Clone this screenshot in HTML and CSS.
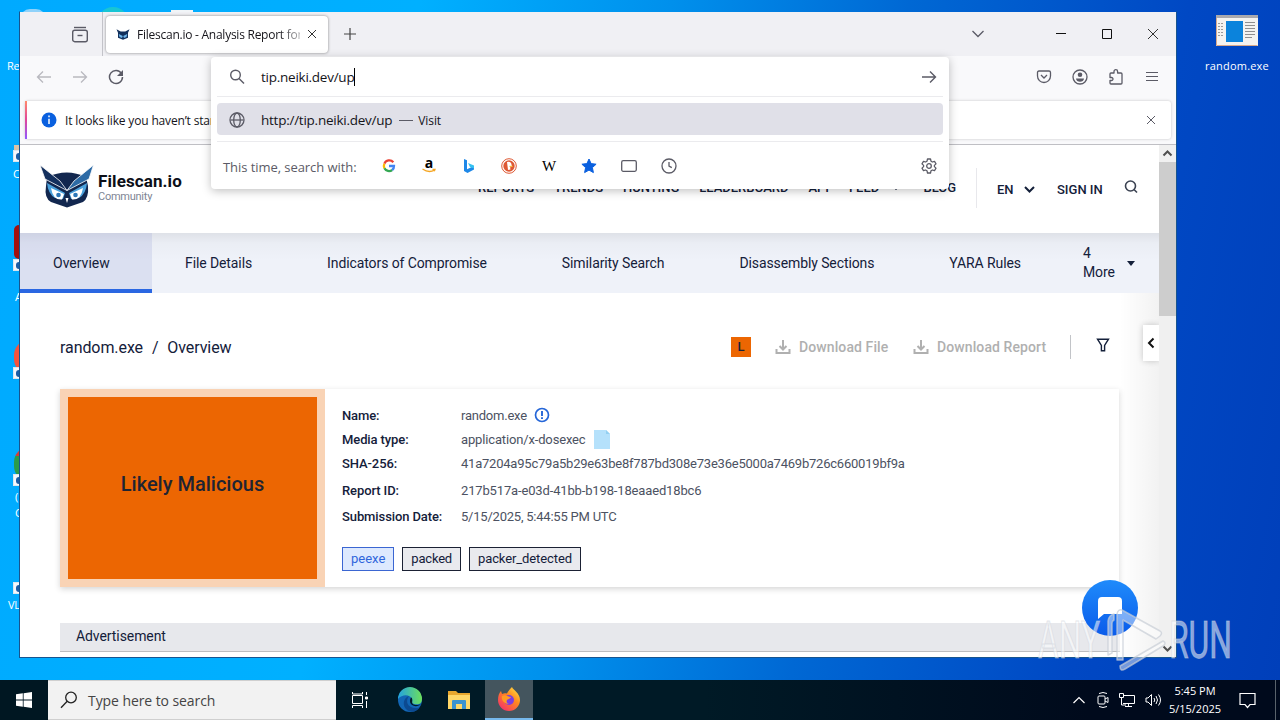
FILE: index.html
```html
<!DOCTYPE html>
<html lang="en">
<head>
    <meta charset="UTF-8">
    <title>Filescan.io - Analysis Report</title>
    <link rel="stylesheet" href="styles.css">
</head>
<body>
<div class="desktop">
    <!-- desktop icons -->
    <div class="peek peek-bin"></div>
    <div class="peek peek-edge"></div>
    <div class="peek peek-doc"></div>
    <span class="icon-label label-re">Re</span>
    <i class="shape shape-cc"></i><i class="shortcut sc-1"></i>
    <span class="icon-label label-cc">C</span>
    <i class="shape shape-red"></i><i class="shortcut sc-2"></i>
    <span class="icon-label label-ac">A</span>
    <i class="shape shape-fox"></i><i class="shortcut sc-3"></i>
    <i class="shape shape-chrome"></i><i class="shortcut sc-4"></i>
    <span class="icon-label label-g">(<br>C</span>
    <i class="shortcut sc-5"></i>
    <span class="icon-label label-vlc">VL</span>
    <div class="exe-icon">
        <svg width="42" height="32" viewBox="0 0 42 32"><path fill="#f4f3f0" d="M0 0h42v31H0z"/><path fill="#a9a9ae" d="M0 0h42v3H0z"/><path fill="#0b83dc" d="M10 6h17v21H10z"/><path stroke="#9b9b9b" stroke-dasharray="2 1" d="M2 8.500h6M2 11.500h6M2 14.500h6M2 17.500h6M2 20.500h6"/><path stroke="#8f8f8f" d="M29 7.500h10M29 10.500h10M29 13.500h10M29 16.500h10M29 19.500h10M29 22.500h7"/><path stroke="#d8a98b" fill="none" d="M.5 3v27.500h41"/></svg>
        <span>random.exe</span>
    </div>

    <!-- browser window -->
    <div class="window">
        <div class="tabstrip">
            <div class="tab-left">
                <svg width="18" height="18" viewBox="0 0 18 18" fill="none" stroke="#5b5b66" stroke-width="1.400"><path d="M3 1.500h12"/><rect x="1.700" y="4.200" width="14.600" height="11.500" rx="2"/><path d="M6.500 9.500h5"/></svg>
            </div>
            <div class="tab">
                <svg width="14" height="13" viewBox="0 0 56 44"><path fill="#12305c" d="M2 1l17 9h18L54 1l-6 14v20L28 43 8 35V15z"/><path fill="#6fb5ea" d="M11 20l16 8-3 8-10-4zM45 20l-16 8 3 8 10-4z"/></svg>
                <span class="tab-title">Filescan.io - Analysis Report for</span>
                <svg width="10" height="10" viewBox="0 0 10 10" stroke="#333"><path d="M1 1l8 8M9 1l-8 8"/></svg>
            </div>
            <svg class="plus" width="12" height="12" viewBox="0 0 12 12" stroke="#444" stroke-width="1.200"><path d="M6 0v12M0 6h12"/></svg>
            <div class="win-buttons">
                <svg width="14" height="8" viewBox="0 0 14 8" fill="none" stroke="#5b5b66" stroke-width="1.300"><path d="M1.500 1L7 6.500 12.500 1"/></svg>
                <svg width="10" height="10" viewBox="0 0 10 10" stroke="#111"><path d="M0 4.500h10"/></svg>
                <svg width="10" height="10" viewBox="0 0 10 10" stroke="#111" fill="none"><path d="M.5.5h9v9h-9z"/></svg>
                <svg width="10" height="10" viewBox="0 0 10 10" stroke="#333"><path d="M0 0l10 10M10 0L0 10"/></svg>
            </div>
        </div>
        <div class="toolbar">
            <div class="nav-buttons">
                <svg width="16" height="16" viewBox="0 0 16 16" fill="none" stroke="#b9b9bf" stroke-width="1.300"><path d="M15 8H1.500M7 2.500L1.500 8 7 13.500"/></svg>
                <svg width="16" height="16" viewBox="0 0 16 16" fill="none" stroke="#b9b9bf" stroke-width="1.300"><path d="M1 8h13.500M9 2.500L14.500 8 9 13.500"/></svg>
                <svg width="16" height="16" viewBox="0 0 16 16" fill="none" stroke="#5b5b66" stroke-width="1.500"><path d="M13.500 4.500A6.500 6.500 0 1 0 14.500 8"/><path fill="#5b5b66" stroke="none" d="M15 1v6H9z"/></svg>
            </div>
            <div class="tool-icons">
                <svg width="16" height="16" viewBox="0 0 16 16" fill="none" stroke="#5b5b66" stroke-width="1.300"><path d="M3 2h10q1.500 0 1.500 1.500V7a6.500 6.500 0 0 1-13 0V3.500Q1.500 2 3 2z"/><path d="M5 6l3 3 3-3"/></svg>
                <svg width="16" height="16" viewBox="0 0 16 16"><circle cx="8" cy="8" r="7" fill="none" stroke="#5b5b66" stroke-width="1.300"/><circle cx="8" cy="5.800" r="2.300" fill="#5b5b66"/><path fill="#5b5b66" d="M4 9.500h8c0 2-2 3.300-4 3.300s-4-1.300-4-3.300z"/></svg>
                <svg width="16" height="16" viewBox="0 0 16 16" fill="none" stroke="#5b5b66" stroke-width="1.300" stroke-linejoin="round"><path d="M2 7V5q0-1 1-1h3V2.500a1.800 1.800 0 0 1 3.600 0V4H13q1 0 1 1v9q0 1-1 1H3q-1 0-1-1v-2.500h1.500a1.500 1.500 0 0 0 0-3H2z"/></svg>
                <svg width="14" height="12" viewBox="0 0 14 12" stroke="#5b5b66" stroke-width="1.200"><path d="M1 1.500h12M1 5.500h12M1 9.500h12"/></svg>
            </div>
        </div>
        <div class="notice-wrap">
            <div class="notice">
                <svg width="16" height="16" viewBox="0 0 16 16"><circle cx="8" cy="8" r="7.500" fill="#0a60df"/><path stroke="#fff" stroke-width="1.500" d="M8 3.500v1.700M8 6.800v5.200"/></svg>
                <span>It looks like you haven’t star</span>
                <svg class="notice-close" width="10" height="10" viewBox="0 0 10 10" stroke="#5b5b66"><path d="M1 1l8 8M9 1l-8 8"/></svg>
            </div>
        </div>

        <div class="viewport">
            <div class="page">
                <div class="header">
                    <div class="logo">
                        <svg width="54" height="44" viewBox="0 0 54 44"><path fill="#12274f" d="M7 13q20-9 39 0l2 9q1 12-5 16l-16 5.500L11 38Q4 34 6 22z"/><path fill="#14305e" stroke="#fff" stroke-width=".8" d="M0 1l20 16 7 9.500L5 15z"/><path fill="#2d6ba6" stroke="#fff" stroke-width=".8" d="M53.500 1L34 17l-7 9.500L49 15z"/><path fill="#4ba1dc" d="M7 19l18 10-2 6-8-1q-7-4-8-15zM47 19L29 29l2 6 8-1q7-4 8-15z"/><path fill="#fff" d="M11 24l13 6-2 5.500q-9 1-11-11.500zM43 24l-13 6 2 5.500q9 1 11-11.500z"/><circle cx="18.500" cy="31" r="2.300" fill="#2c77b8"/><circle cx="35.500" cy="31" r="2.300" fill="#2c77b8"/><path fill="#fff" d="M25.500 34h3L27 39z"/></svg>
                        <div class="logo-text"><b>Filescan.io</b><span>Community</span></div>
                    </div>
                    <div class="menu">
                        <a>REPORTS</a><a>TRENDS</a><a>HUNTING</a><a>LEADERBOARD</a><a>API</a>
                        <a class="feed">FEED <svg width="8" height="5" viewBox="0 0 8 5" fill="none" stroke="#14203a" stroke-width="1.500"><path d="M0 .5l4 3.500 4-3.500"/></svg></a>
                        <a>BLOG</a>
                    </div>
                    <div class="account">
                        <a class="lang">EN <svg width="11" height="7" viewBox="0 0 11 7" fill="none" stroke="#14203a" stroke-width="2"><path d="M1 1l4.500 4.500L10 1"/></svg></a>
                        <a class="signin">SIGN IN</a>
                        <svg class="find" width="14" height="14" viewBox="0 0 14 14" fill="none" stroke="#3b4252" stroke-width="1.600"><circle cx="6.500" cy="6" r="5"/><path d="M10 9.500l3 3"/></svg>
                    </div>
                </div>
                <div class="report-tabs">
                    <a class="active">Overview</a>
                    <a>File Details</a>
                    <a>Indicators of Compromise</a>
                    <a>Similarity Search</a>
                    <a>Disassembly Sections</a>
                    <a>YARA Rules</a>
                    <a class="more"><span>4<br>More</span><i></i></a>
                </div>
                <div class="content">
                    <div class="crumbs">
                        <h1>random.exe <em>/</em> Overview</h1>
                        <span class="verdict-l">L</span>
                        <a class="dl dl-file"><svg width="16" height="16" viewBox="0 0 16 16" fill="none" stroke="#b0b0b0" stroke-width="2"><path d="M8 1v9M4.500 7L8 10.500 11.500 7M1.500 10v4h13v-4"/></svg>Download File</a>
                        <a class="dl dl-report"><svg width="16" height="16" viewBox="0 0 16 16" fill="none" stroke="#b0b0b0" stroke-width="2"><path d="M8 1v9M4.500 7L8 10.500 11.500 7M1.500 10v4h13v-4"/></svg>Download Report</a>
                        <svg class="filter" width="14" height="14" viewBox="0 0 14 14" fill="none" stroke="#14203a" stroke-width="1.400"><path d="M1.500 1.200h11L8.600 7.500v5.300H5.400V7.500z"/></svg>
                    </div>
                    <div class="card">
                        <div class="verdict">Likely Malicious</div>
                        <div class="details">
                            <div class="row"><b>Name:</b><span>random.exe</span><svg class="alert" width="16" height="16" viewBox="0 0 16 16"><circle cx="8" cy="8" r="6.500" fill="#fff" stroke="#2566d8" stroke-width="1.700"/><path stroke="#2566d8" stroke-width="1.900" d="M8 4v5M8 10.300V12"/></svg></div>
                            <div class="row"><b>Media type:</b><span class="mime">application/x-dosexec</span><svg class="file" width="16" height="19" viewBox="0 0 16 19"><path fill="#b5e1fb" d="M0 0h12l4 4v15H0z"/><path fill="#93d0f2" d="M12 0l4 4h-4z"/></svg></div>
                            <div class="row"><b>SHA-256:</b><span>41a7204a95c79a5b29e63be8f787bd308e73e36e5000a7469b726c660019bf9a</span></div>
                            <div class="row tall first"><b>Report ID:</b><span class="mime">217b517a-e03d-41bb-b198-18eaaed18bc6</span></div>
                            <div class="row tall"><b>Submission Date:</b><span>5/15/2025, 5:44:55 PM UTC</span></div>
                            <div class="tags"><span class="tag blue">peexe</span><span class="tag">packed</span><span class="tag">packer_detected</span></div>
                        </div>
                    </div>
                    <div class="advert">Advertisement</div>
                </div>
                <div class="drawer-shade"></div>
                <div class="drawer"><svg width="8" height="12" viewBox="0 0 8 12" fill="none" stroke="#111" stroke-width="2"><path d="M6.500 1.500L2 6l4.500 4.500"/></svg></div>
                <div class="chat"><svg width="26" height="23" viewBox="0 0 26 23"><path fill="#fff" d="M5 0h16q4 0 4 4v13H7l-6 5V4q0-4 4-4z"/></svg></div>
            </div>
            <div class="scrollbar">
                <svg width="17" height="17" viewBox="0 0 17 17" fill="none" stroke="#505050" stroke-width="2"><path d="M4.500 10.500l4-4 4 4"/></svg>
                <div class="thumb"></div>
                <svg width="17" height="17" viewBox="0 0 17 17" fill="none" stroke="#505050" stroke-width="2"><path d="M4.500 6.500l4 4 4-4"/></svg>
            </div>
        </div>

        <!-- address bar dropdown -->
        <div class="urlbar">
            <div class="url-input">
                <svg width="16" height="16" viewBox="0 0 16 16" fill="none" stroke="#5b5b66" stroke-width="1.400"><circle cx="6.500" cy="6" r="4.800"/><path d="M10 9.500l5 5"/></svg>
                <span class="url-text">tip.neiki.dev/up</span><i class="caret"></i>
                <svg class="go" width="16" height="16" viewBox="0 0 16 16" fill="none" stroke="#5b5b66" stroke-width="1.400"><path d="M1 8h13.500M9 2.500L14.500 8 9 13.500"/></svg>
            </div>
            <div class="result">
                <svg width="16" height="16" viewBox="0 0 16 16" fill="none" stroke="#5b5b66" stroke-width="1.300"><circle cx="8" cy="8" r="7"/><ellipse cx="8" cy="8" rx="3.300" ry="7"/><path d="M1.500 8h13"/></svg>
                <span class="result-url">http://tip.neiki.dev/up</span><span class="visit"><s></s>Visit</span>
            </div>
            <div class="engines">
                <span class="engines-label">This time, search with:</span>
                <svg width="16" height="16" viewBox="0 0 16 16" fill="none" stroke-width="2.300"><path stroke="#ea4335" d="M12.300 4.200A5.200 5.200 0 0 0 3.400 5.700"/><path stroke="#fbbc05" d="M3.400 5.700a5.200 5.200 0 0 0 0 4.600"/><path stroke="#34a853" d="M3.400 10.300a5.200 5.200 0 0 0 7.800 1.700"/><path stroke="#4285f4" d="M11.200 12A5 5 0 0 0 13 8H8"/></svg>
                <svg width="16" height="16" viewBox="0 0 16 16" overflow="visible"><text x="8" y="10" text-anchor="middle" class="amazon">a</text><path d="M1.500 11q6.500 4.500 12 1M11.500 11.300h2.500l-.7 2" fill="none" stroke="#f5a623" stroke-width="1.300"/></svg>
                <svg width="16" height="16" viewBox="0 0 16 16"><path fill="#1e88e8" d="M3 1l3 1.200v9L13 8v3.500L6.500 15 3 13z"/><path fill="#35c1f1" d="M7 5l6 2.500v3L9 9z"/></svg>
                <svg width="16" height="16" viewBox="0 0 16 16"><circle cx="8" cy="8" r="7.300" fill="#fff" stroke="#de5833"/><circle cx="8" cy="8" r="5.700" fill="#de5833"/><path fill="#fff" d="M6 4q4-1 4.500 2.500l.5 2-2 1 .5 2-2.500.5z"/><path fill="#fbbc3d" d="M8.500 7.800h3V9h-3z"/></svg>
                <svg width="16" height="16" viewBox="0 0 16 16"><text x="8" y="13" text-anchor="middle" class="wiki">W</text></svg>
                <svg width="16" height="16" viewBox="0 0 16 16"><path fill="#0a60df" stroke="#0a60df" stroke-linejoin="round" d="M8 1l2.100 4.600 5 .6-3.700 3.400 1 5L8 12.100l-4.400 2.500 1-5L.9 6.200l5-.6z"/></svg>
                <svg width="16" height="16" viewBox="0 0 16 16" fill="none" stroke="#5b5b66" stroke-width="1.300"><rect x=".7" y="2.700" width="14.600" height="10.600" rx="1.500"/></svg>
                <svg width="16" height="16" viewBox="0 0 16 16" fill="none" stroke="#5b5b66" stroke-width="1.300"><circle cx="8" cy="8" r="7"/><path d="M8 4v4l2.800 1.600"/></svg>
                <svg class="gear" width="16" height="16" viewBox="0 0 16 16" fill="none" stroke="#5b5b66" stroke-width="1.300" stroke-linejoin="round"><path d="M6.500 1h3l.5 2.200 1.400.8 2.100-.7L15 5.900 13.400 7.400v1.200L15 10.100l-1.500 2.600-2.100-.7-1.400.8-.5 2.200h-3L6 12.800 4.600 12l-2.100.7L1 10.100l1.600-1.500V7.400L1 5.900l1.500-2.600 2.100.7L6 3.200z"/><circle cx="8" cy="8" r="2.300"/></svg>
            </div>
        </div>
    </div>

    <!-- watermark -->
    <svg class="watermark" width="200" height="68" viewBox="0 0 200 68" overflow="visible">
        <g class="wm-text"><text x="2" y="52" textLength="62" lengthAdjust="spacingAndGlyphs">ANY</text><text x="133" y="52" textLength="63" lengthAdjust="spacingAndGlyphs">RUN</text></g>
        <g fill="rgba(255,255,255,.45)" stroke="#c8cdd6" stroke-opacity=".7" stroke-width="1.500" stroke-linejoin="round"><path d="M72 49V15q1-6 6-7v6q-2 1-2 3v30z"/><path d="M81 8q1-5 5-4l38 21q3 2 0 5l-4 3-33-19v40h-6z"/><path d="M84 60l43-25q4 2 0 5L89 63q-5 3-5-3z"/></g>
    </svg>
</div>

<!-- taskbar -->
<div class="taskbar">
    <div class="start"><svg width="16" height="16" viewBox="0 0 16 16" fill="#fff"><path d="M0 2.200L6.800 1.300v6.300H0zM7.600 1.200L16 0v7.600H7.600zM0 8.400h6.800v6.300L0 13.800zM7.600 8.400H16V16l-8.400-1.200z"/></svg></div>
    <div class="search"><svg width="18" height="18" viewBox="0 0 18 18" fill="none" stroke="#222" stroke-width="1.300"><circle cx="11" cy="6.500" r="5.300"/><path d="M7.200 10.300L1 16.800"/></svg><span>Type here to search</span></div>
    <div class="apps">
        <div class="app"><svg width="18" height="18" viewBox="0 0 18 18" fill="none" stroke="#fff"><path d="M1.500 4.500h10v8h-10zM1.500 1v2h10V1M1.500 17v-2.500h10V17M15.500 1v3M15.500 10v7"/><path fill="#fff" d="M14.500 6h2v2h-2z"/></svg></div>
        <div class="app"><svg width="26" height="26" viewBox="0 0 26 26"><defs><linearGradient id="e1" x1="0" x2="1"><stop stop-color="#23a3e0"/><stop offset="1" stop-color="#6de05c"/></linearGradient></defs><circle cx="13" cy="13" r="12" fill="#1266b5"/><path fill="url(#e1)" d="M1 12A12 12 0 0 1 25 12c0 5-4 6-8 5-3-1-1-2-2-5-2-5-10-5-14 0z"/><path fill="#0c4a91" d="M12 9c-4 5-2 13 9 12 1 0 2-1 2-1-3 5-9 6-13 3-5-4-4-12 2-14z"/><path fill="#001a26" d="M14.500 10.500c2 3-1 5 2 7 3 1 6 .5 7.500-.5-4 4-11 2-11-3 0-2 .5-3 1.500-3.500z"/></svg></div>
        <div class="app"><svg width="22" height="20" viewBox="0 0 22 20"><path fill="#e8a72e" d="M0 1h8l2 2h12v15H0z"/><path fill="#ffd768" d="M0 5h22v14H0z"/><path fill="#3c93cf" d="M4 11q0-1 1-1h12q1 0 1 1v8h-4v-5H8v5H4z"/></svg></div>
        <div class="app current"><svg width="24" height="24" viewBox="0 0 24 24"><defs><linearGradient id="f1" x1="1" x2=".2" y2="1"><stop stop-color="#fff04a"/><stop offset=".45" stop-color="#ff8a1f"/><stop offset="1" stop-color="#f4306a"/></linearGradient></defs><path fill="url(#f1)" d="M15 0c1 3 8 6 8 13A11 11 0 0 1 1 13c0-4 1-7 3-9l1 3c2-1 3-1 5-.500 0 0 2-4 5-6.500z"/><circle cx="12" cy="13" r="5" fill="#7a3fe0"/><path fill="#ff9a24" d="M5 9c4-2 6 1 9 1-1 2-3 2-4 3-1 2 0 3 2 4-5 0-8-4-7-8z"/></svg></div>
    </div>
    <div class="tray">
        <svg width="12" height="8" viewBox="0 0 12 8" fill="none" stroke="#fff" stroke-width="1.200"><path d="M.5 7L6 1.500 11.500 7"/></svg>
        <svg width="12" height="18" viewBox="0 0 12 18" fill="none" stroke="#fff"><rect x="1" y="5" width="7" height="8" rx="1"/><path d="M8 8l3-1.500v5L8 10M2 2.500q4-2 8 0M2 15.500q4 2 8 0"/></svg>
        <svg width="16" height="14" viewBox="0 0 16 14" fill="none" stroke="#fff"><path d="M4 2.500h11.500v8H4M.5.500h4v4h-4zM2.500 4.500V12H7M9.500 10.500v3M6 13.500h7"/></svg>
        <svg width="17" height="14" viewBox="0 0 17 14" fill="none" stroke="#fff"><path d="M1 5h2l3.500-3.500v11L3 9H1zM9 5q1.500 2 0 4M11 3q3 4 0 8M13.500 1.500q4 5.500 0 11"/></svg>
        <div class="clock">5:45 PM<br>5/15/2025</div>
        <svg class="action" width="17" height="17" viewBox="0 0 17 17" fill="none" stroke="#fff" stroke-width="1.200"><path d="M1 1.500h15v11h-5L8.500 15.500 6 12.500H1z"/></svg>
    </div>
    <div class="show-desktop"></div>
</div>
</body>
</html>
```
FILE: styles.css
```css
* {
    box-sizing: border-box;
}
body {
    margin: 0;
    width: 1280px;
    height: 720px;
    overflow: hidden;
    font-family: "Open Sans", "Noto Sans", sans-serif;
    font-size: 12px;
    color: #15141a;
}
svg {
    display: block;
    flex: none;
}

/* desktop */
.desktop {
    position: relative;
    height: 680px;
    overflow: hidden;
    background: linear-gradient(100deg, #00aaff 0%, #00b0ff 30%, #0090ec 48%, #0068d4 65%, #0048c4 85%, #003fba 100%);
}
.peek {
    position: absolute;
}
.peek-bin {
    left: 20px;
    top: 9px;
    width: 26px;
    height: 20px;
    border-radius: 10px;
    background: #8fd2fa;
}
.peek-edge {
    left: 97px;
    top: 7px;
    width: 32px;
    height: 32px;
    border-radius: 50%;
    background: #18c5d4;
}
.peek-doc {
    left: 171px;
    top: 10px;
    width: 22px;
    height: 20px;
    background: #f1f5f8;
}
.icon-label {
    position: absolute;
    color: #fff;
    font-size: 11px;
    line-height: 16px;
    white-space: nowrap;
    letter-spacing: -.3px;
}
.label-re { left: 7px; top: 58px; }
.label-cc { left: 13px; top: 166px; }
.label-ac { left: 15px; top: 289px; }
.label-g { left: 15px; top: 489px; }
.label-vlc { left: 8px; top: 597px; }
.shape {
    position: absolute;
    left: 14px;
    width: 30px;
    height: 34px;
}
.shape-cc { top: 145px; height: 14px; background: #d9c3a8; }
.shape-red { top: 225px; border-radius: 5px; background: #a3110f; }
.shape-fox { top: 340px; border-radius: 15px; background: #f4533c; }
.shape-chrome { top: 447px; border-radius: 15px; background: linear-gradient(#d93a35 25%, #2b9b4a 25%); }
.shortcut {
    position: absolute;
    left: 13px;
    width: 12px;
    height: 12px;
    background: #f4f7fb;
    border: 1px solid #dce6ee;
}
.shortcut:after {
    content: "";
    position: absolute;
    left: 2px;
    top: 2px;
    width: 6px;
    height: 7px;
    border-radius: 3px 0 0 3px;
    background: #1c5da6;
}
.sc-1 { top: 150px; }
.sc-2 { top: 259px; }
.sc-3 { top: 367px; }
.sc-4 { top: 474px; }
.sc-5 { top: 582px; }
.exe-icon {
    position: absolute;
    left: 1196px;
    top: 15px;
    width: 82px;
    display: flex;
    flex-direction: column;
    align-items: center;
    gap: 11px;
    color: #fff;
    font-size: 11px;
    line-height: 16px;
    letter-spacing: .2px;
}

/* window */
.window {
    position: absolute;
    left: 19px;
    top: 11px;
    width: 1158px;
    height: 647px;
    border: 1px solid #17548f;
    border-top-color: transparent;
    background: #fff;
    background-clip: padding-box;
    display: flex;
    flex-direction: column;
}
.tabstrip {
    height: 44px;
    background: #f0f0f4;
    display: flex;
    align-items: center;
}
.tab-left {
    width: 83px;
    height: 44px;
    padding: 14px 0 0 51px;
    border-right: 1px solid #c3c3c9;
}
.tab {
    width: 222px;
    height: 37px;
    margin-left: 3px;
    padding: 0 11px 0 10px;
    border-radius: 4px;
    background: #fff;
    box-shadow: 0 0 3px rgba(0, 0, 0, .45);
    display: flex;
    align-items: center;
    gap: 7px;
}
.tab-title {
    flex: none;
    width: 163px;
    white-space: nowrap;
    font-size: 12px;
    letter-spacing: -.25px;
    -webkit-mask-image: linear-gradient(90deg, #000 142px, rgba(0, 0, 0, .3) 163px);
    mask-image: linear-gradient(90deg, #000 142px, rgba(0, 0, 0, .3) 163px);
}
.plus {
    margin-left: 16px;
}
.win-buttons {
    margin-left: auto;
    padding-right: 18px;
    display: flex;
    align-items: center;
    gap: 36px;
}
.win-buttons svg:first-child {
    margin-right: 35px;
}
.toolbar {
    height: 43px;
    background: #f9f9fb;
    display: flex;
    align-items: center;
    justify-content: space-between;
    padding: 0 17px 2px 16px;
}
.nav-buttons, .tool-icons {
    display: flex;
    align-items: center;
    gap: 20px;
}
.tool-icons svg:last-child {
    margin-left: 1px;
}
.notice-wrap {
    height: 46px;
    padding: 2px 5px 4px;
    background: #f9f9fb;
    border-bottom: 1px solid #bfbfc4;
}
.notice {
    position: relative;
    height: 38px;
    padding: 0 15px 0 16px;
    border-radius: 3px;
    background: #fff;
    box-shadow: 0 0 3px rgba(0, 0, 0, .22);
    display: flex;
    align-items: center;
    gap: 8px;
    font-size: 12px;
    letter-spacing: -.16px;
}
.notice:before {
    content: "";
    position: absolute;
    left: 0;
    top: 0;
    width: 2px;
    height: 38px;
    background: linear-gradient(#ff8a6c, #e0459b 50%, #9059ff);
}
.notice-close {
    margin-left: auto;
}

/* address bar */
.urlbar {
    position: absolute;
    left: 191px;
    top: 45px;
    width: 738px;
    height: 132px;
    padding: 0 6px;
    border-radius: 4px;
    background: #fff;
    box-shadow: 0 2px 10px rgba(0, 0, 0, .25);
}
.url-input {
    height: 40px;
    padding: 0 6px 0 12px;
    border-bottom: 1px solid #ebebee;
    display: flex;
    align-items: center;
}
.url-text, .result-url {
    margin-left: 16px;
    font-size: 13.500px;
    letter-spacing: -.25px;
}
.caret {
    width: 1px;
    height: 18px;
    background: #000;
}
.go {
    margin-left: auto;
}
.result {
    height: 32px;
    margin: 6px 0;
    padding: 2px 0 0 12px;
    border-radius: 4px;
    background: #e0e0e8;
    display: flex;
    align-items: center;
}
.visit {
    display: flex;
    align-items: center;
    margin-left: 7px;
    font-size: 12px;
    letter-spacing: -.1px;
}
.visit s {
    width: 14px;
    height: 1px;
    margin-right: 5px;
    background: #5b5b66;
}
.engines {
    height: 48px;
    border-top: 1px solid #ebebee;
    padding: 1px 6px 0;
    display: flex;
    align-items: center;
    gap: 24px;
}
.engines-label {
    width: 134px;
    padding-top: 1px;
    white-space: nowrap;
    font-size: 13px;
    letter-spacing: -.06px;
    color: #5b5b66;
}
.gear {
    margin-left: auto;
}
.amazon {
    font: bold 14px "Open Sans", sans-serif;
}
.wiki {
    font: 15px "Liberation Serif", serif;
}

/* page */
.viewport {
    flex: 1;
    display: flex;
    overflow: hidden;
}
.page {
    position: relative;
    width: 1139px;
    overflow: hidden;
    font-family: Roboto, sans-serif;
    color: #14203a;
}
.scrollbar {
    width: 17px;
    background: #f0f0f0;
    display: flex;
    flex-direction: column;
}
.scrollbar .thumb {
    height: 154px;
    margin-bottom: auto;
    background: #cdcdcd;
}
.header {
    height: 88px;
    padding: 0 0 3px 20px;
    display: flex;
    align-items: center;
    font-size: 13px;
    font-weight: 500;
}
.logo {
    display: flex;
    align-items: center;
    gap: 4px;
    width: 438px;
    padding-bottom: 4px;
}
.logo-text {
    padding-top: 4px;
    display: flex;
    flex-direction: column;
}
.logo-text b {
    font-size: 17px;
    line-height: 18px;
    letter-spacing: .1px;
    color: #0c0f18;
}
.logo-text span {
    font-size: 11px;
    line-height: 13px;
    font-weight: 400;
    letter-spacing: -.25px;
    color: #7e8594;
}
.menu {
    display: flex;
    gap: 20px;
    white-space: nowrap;
    letter-spacing: -.02px;
}
.menu svg {
    display: inline-block;
    margin: 0 3px 2px 10px;
}
.account {
    height: 40px;
    margin-left: auto;
    padding-left: 20px;
    border-left: 1px solid #e8e8ec;
    width: 183px;
    padding-top: 3px;
    display: flex;
    align-items: center;
}
.lang {
    display: flex;
    align-items: center;
    gap: 10px;
    width: 60px;
}
.signin {
    width: 67px;
}
.find {
    margin-bottom: 5px;
}
.report-tabs {
    height: 60px;
    background: #eff2f9;
    background-image: linear-gradient(rgba(0, 0, 0, .07), rgba(0, 0, 0, .02) 10px, transparent 28px);
    display: flex;
    font-size: 14px;
    line-height: 60px;
    white-space: nowrap;
    letter-spacing: -.1px;
}
.report-tabs a {
    padding: 0 42px 0 33px;
}
.report-tabs .active {
    width: 132px;
    border-bottom: 4px solid #2a67e2;
    background: rgba(150, 160, 215, .22);
    letter-spacing: 0;
}
.report-tabs .more {
    display: flex;
    align-items: center;
    line-height: 19px;
    gap: 12px;
    padding: 0 0 0 20px;
}
.more i {
    border: 4px solid transparent;
    border-top: 5px solid #14203a;
    border-bottom: 0;
}
.content {
    padding: 0 40px 0 40px;
}
.crumbs {
    height: 96px;
    padding-top: 12px;
    display: flex;
    align-items: center;
}
.crumbs h1 {
    width: 671px;
    margin: 0;
    font-size: 16px;
    font-weight: 400;
    letter-spacing: -.08px;
}
.crumbs em {
    margin: 0 5px;
    font-style: normal;
}
.verdict-l {
    width: 20px;
    height: 20px;
    margin-right: 24px;
    background: #ec6602;
    font-size: 13px;
    font-weight: 500;
    line-height: 20px;
    text-align: center;
}
.dl {
    display: flex;
    align-items: center;
    gap: 8px;
    color: #b0b0b0;
    font-size: 14px;
    font-weight: 500;
    letter-spacing: .1px;
    white-space: nowrap;
}
.dl-file {
    width: 138px;
}
.dl-report {
    width: 158px;
    height: 24px;
    border-right: 1px solid #c2c4c8;
}
.filter {
    margin: 0 0 4px 25px;
}
.card {
    width: 1059px;
    height: 198px;
    background: #fff;
    box-shadow: 0 2px 6px rgba(0, 0, 0, .17);
    display: flex;
}
.verdict {
    width: 265px;
    height: 198px;
    padding-bottom: 8px;
    border: 8px solid #f9d3b5;
    background: #ec6602;
    display: flex;
    align-items: center;
    justify-content: center;
    font-size: 20px;
    font-weight: 500;
    color: #1e2433;
}
.details {
    padding: 14px 17px;
    font-size: 13px;
    letter-spacing: -.22px;
}
.row {
    height: 24px;
    display: flex;
    align-items: center;
}
.row.tall {
    height: 26px;
}
.row.first {
    margin-top: 2px;
}
.row b {
    width: 119px;
    font-weight: 500;
    letter-spacing: -.1px;
}
.row span {
    color: #4c5262;
}
.row .mime {
    letter-spacing: -.15px;
}
.alert {
    margin-left: 7px;
}
.file {
    margin-left: 8px;
}
.tags {
    display: flex;
    gap: 8px;
    margin-top: 18px;
    letter-spacing: -.2px;
}
.tag {
    height: 24px;
    padding: 0 8px;
    border: 1px solid #1b2134;
    background: #e9eaee;
    line-height: 22px;
}
.tag:last-child {
    letter-spacing: -.1px;
}
.tag.blue {
    border-color: #3b66d2;
    background: #dde9fe;
    color: #2f66dc;
    letter-spacing: 0;
}
.advert {
    width: 1060px;
    height: 29px;
    margin-top: 36px;
    padding: 0 16px;
    border-bottom: 1px solid #bcbdc0;
    background: #e7e8ec;
    font-size: 14px;
    line-height: 27px;
    letter-spacing: -.08px;
}
.drawer-shade {
    position: absolute;
    right: 0;
    top: 148px;
    width: 40px;
    height: 364px;
    background: linear-gradient(90deg, rgba(0, 0, 0, 0), rgba(0, 0, 0, .05));
}
.drawer {
    position: absolute;
    right: 0;
    top: 180px;
    width: 16px;
    height: 36px;
    padding: 12px 0 0 4px;
    background: #fff;
    box-shadow: 0 0 6px rgba(0, 0, 0, .2);
}
.chat {
    position: absolute;
    left: 1062px;
    top: 435px;
    width: 56px;
    height: 56px;
    padding: 17px 0 0 15px;
    border-radius: 50%;
    background: linear-gradient(#1f8bfb, #0a5bea);
}
.watermark {
    position: absolute;
    left: 1036px;
    top: 606px;
}
.wm-text {
    font: 400 51px Roboto, sans-serif;
    fill: rgba(255, 255, 255, .55);
    stroke: #c8cdd6;
    stroke-opacity: .5;
    stroke-width: 1px;
}

/* taskbar */
.taskbar {
    height: 40px;
    background: linear-gradient(90deg, #001a26 55%, #000a1c 85%);
    display: flex;
    color: #fff;
}
.start, .app {
    width: 48px;
    display: flex;
    align-items: center;
    justify-content: center;
}
.start {
    background: #001722;
}
.search {
    width: 288px;
    padding-left: 12px;
    background: #f2f2f2;
    border: 1px solid #cfcfcf;
    border-width: 1px 0;
    display: flex;
    align-items: center;
    gap: 10px;
    font-size: 14px;
    letter-spacing: -.08px;
    color: #444;
}
.apps {
    width: 197px;
    display: flex;
    justify-content: space-between;
}
.current {
    background: #44555e;
    border-bottom: 2px solid #76b9ed;
}
.tray {
    margin-left: auto;
    width: 203px;
    padding-left: 1px;
    display: flex;
    align-items: center;
}
.tray svg {
    margin-right: 10px;
}
.tray svg:nth-child(1) {
    margin-right: 12px;
}
.tray svg:nth-child(4) {
    margin-right: 8px;
}
.tray .clock {
    width: 62px;
    margin-left: -6px;
    text-align: center;
    line-height: 18px;
    font-size: 11px;
    white-space: nowrap;
}
.tray .action {
    margin: 0 0 0 13px;
}
.show-desktop {
    width: 5px;
    border-left: 1px solid #59636b;
}
```
